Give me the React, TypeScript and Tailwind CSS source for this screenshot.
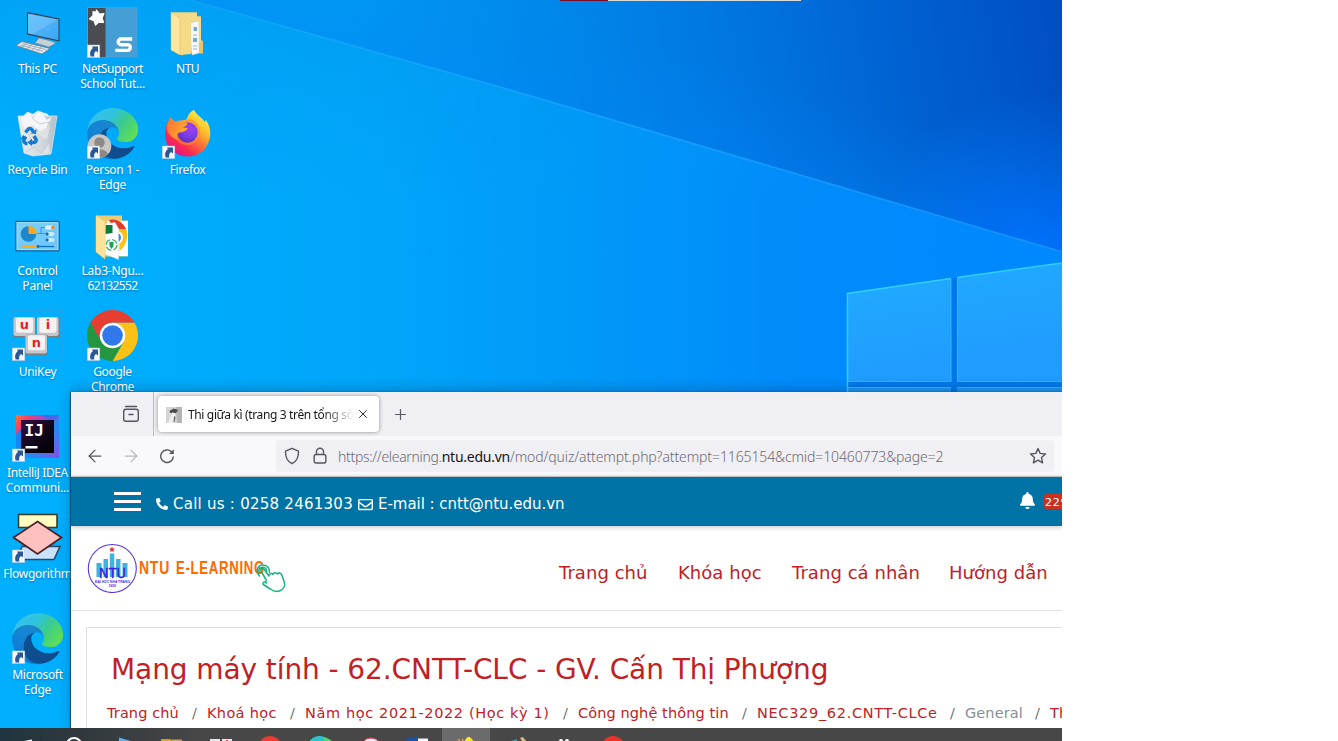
import type { ReactNode } from "react";
import { ArrowLeft, ArrowRight, Plus, X } from "lucide-react";
import { FaPhoneAlt, FaRegEnvelope, FaBell } from "react-icons/fa";

function Shortcut() {
  return (
    <g>
      <rect x="0.3" y="38" width="12.5" height="12.5" fill="#f4f7fb" stroke="#b8c9d8" strokeWidth="0.5" />
      <path d="M5 39.600h6v6l-2-1.700c-1.800 1.300-2.100 2.600-1.700 5.600H3.600c-1.100-3.700-.4-6.200 2.300-8.600Z" fill="#2b5797" />
    </g>
  );
}

function Glyph({ children }: { children: ReactNode }) {
  return (
    <svg viewBox="0 0 51 51" className="h-[51px] w-[51px] shrink-0 overflow-visible">
      {children}
    </svg>
  );
}

function ThisPC() {
  return (
    <Glyph>
      <defs>
        <linearGradient id="pcs" x1="0" y1="0" x2="1" y2="1">
          <stop offset="0" stopColor="#5fbcf8" />
          <stop offset="1" stopColor="#3aa6f5" />
        </linearGradient>
      </defs>
      <path d="M15 5l32.500 6.400v23L15 27.500Z" fill="#2f3d4a" />
      <path d="M16 6.600l30.500 6v20.600L16 26.400Z" fill="url(#pcs)" />
      <path d="M16 6.600l30.500 6L20 27.300l-4-.9Z" fill="#8fd2ff" opacity="0.350" />
      <path d="M27 31l5 1.200 6 1.500 6 2.300-7 4-14-4Z" fill="#c9d0d6" stroke="#77838d" strokeWidth="0.6" />
      <path d="M10 34.500l28 7-8 5.500L4 38.500Z" fill="#e6eaee" stroke="#6d7a85" strokeWidth="0.8" />
      <path d="M10 36.500l24 6M8 38l23 6.200M15 35.700l-5 4.500M20 37l-5 4.800M25 38.300l-5 4.900M30 39.500l-5 5.200" stroke="#8a97a3" strokeWidth="0.7" />
    </Glyph>
  );
}

function NetSupport() {
  return (
    <Glyph>
      <rect x="0.5" y="0.5" width="49.500" height="49.500" fill="#439fd6" stroke="#4ba4da" strokeWidth="0.800" />
      <rect x="1" y="1" width="17.500" height="49" fill="#4b4c51" />
      <path d="M9.500 3l3 4 4.500-.5-2 4.500 1.500 4.500-5-.2-3 2.700-1.500-4.200L2.500 12 6 8.800 6 4.500l3 .8Z" fill="#fff" stroke="#fff" strokeWidth="1.200" strokeLinejoin="round" />
      <path d="M43.500 32H34a2.800 2.800 0 0 0 0 5.700h6.500a2.800 2.800 0 0 1 0 5.700H30" fill="none" stroke="#fff" strokeWidth="3.400" strokeLinecap="square" />
      <Shortcut />
    </Glyph>
  );
}

function FolderNTU() {
  return (
    <Glyph>
      <path d="M9 5.500h26v4h4v24h2v13h-3L9 43Z" fill="#e7c566" />
      <path d="M9 5.500h26v4h4v26H9Z" fill="#f4d987" />
      <path d="M27 16l10-2v32l-7 2Z" fill="#fafafa" stroke="#c8cfd6" strokeWidth="0.6" />
      <path d="M31.500 20h3.500v4h-3.500zM31 31h4v4h-4z" fill="#3a87b8" opacity="0.700" />
      <path d="M31 28h4M31 39h4M31 42h4" stroke="#8aa2b2" strokeWidth="0.800" />
      <path d="M9 5.500l12 8v35L9 43Z" fill="#ffe8a0" />
      <path d="M18 9l11-3v41l-11 1Z" fill="#f5da88" />
      <path d="M9 5.500l9 5.500v37L9 43Z" fill="#fde7a3" stroke="#dfbd62" strokeWidth="0.6" />
    </Glyph>
  );
}

function RecycleBin() {
  return (
    <Glyph>
      <defs>
        <linearGradient id="bin" x1="0" y1="0" x2="1" y2="0">
          <stop offset="0" stopColor="#e8edf0" />
          <stop offset="0.6" stopColor="#d3dade" />
          <stop offset="1" stopColor="#b4bec6" />
        </linearGradient>
      </defs>
      <path d="M11 8l5-4 5 2 5-3.500 5 2 4 1 4 4.500-5 5H14Z" fill="#eef0f2" />
      <path d="M6 8h39l-6 38-18 2-9-3Z" fill="url(#bin)" stroke="#d8e4ec" strokeWidth="0.8" />
      <path d="M15 4l6 6 7-6 7 8 4-3-3 10-8 4-8-6-8 3-3-9Z" fill="#f5f6f7" />
      <path d="M20 10l8 6 9-2-4 12-9-3-8 4M14 44l8-5 8 6 7-9-3-8" fill="none" stroke="#bdc6cd" strokeWidth="0.800" />
      <path d="M24 24l14-6-3 14ZM29 47l8-12 1 10Z" fill="#f3f4f5" opacity="0.500" />
      <g fill="none" stroke="#1878d0" strokeWidth="3.400">
        <path d="M13.500 24.500l2.800-3.500q2-1.500 4 1l1 2" />
        <path d="M22 28l2.200 3.500q0 3-3 3h-2.500" />
        <path d="M15.500 35.500H14q-3-1.500-2-4l1.800-2.800" />
      </g>
      <path d="M19 25.500l5 .5.500-5ZM20 30.500l-4.500 4 4.500 3.500ZM15.500 30L11 27l-2.500 4.500Z" fill="#1878d0" />
    </Glyph>
  );
}

function EdgePaths({ id }: { id: string }) {
  return (
    <g transform="scale(0.2)">
      <defs>
        <linearGradient id={`${id}a`} x1="0.200" y1="0.200" x2="1" y2="0.500">
          <stop offset="0" stopColor="#0d4f91" />
          <stop offset="1" stopColor="#114a8b" />
        </linearGradient>
        <linearGradient id={`${id}b`} x1="0.700" y1="0" x2="0.200" y2="0.900">
          <stop offset="0" stopColor="#1b86cc" />
          <stop offset="0.500" stopColor="#1384d5" />
          <stop offset="1" stopColor="#0a78d4" />
        </linearGradient>
        <linearGradient id={`${id}c`} x1="0" y1="0.200" x2="1" y2="0.700">
          <stop offset="0" stopColor="#35c1f1" />
          <stop offset="0.400" stopColor="#2fc4dc" />
          <stop offset="0.650" stopColor="#3acb8e" />
          <stop offset="1" stopColor="#60e050" />
        </linearGradient>
      </defs>
      <path fill={`url(#${id}b)`} d="M105.7 241.4a79.2 79.2 0 0 1-22.7-21.3 80.7 80.7 0 0 1 29.5-120c3.2-1.500 8.500-4.100 15.600-4a32.400 32.400 0 0 1 25.700 13 31.900 31.900 0 0 1 6.300 18.700c0-.2 24.500-79.600-80-79.600-43.900 0-80 41.600-80 78.200a130.200 130.200 0 0 0 12.100 56 128 128 0 0 0 156.400 67 75.500 75.500 0 0 1-62.800-8Z" />
      <path fill={`url(#${id}a)`} d="M231 190.500c-3.400 1.800-6.900 3.400-10.500 4.700a101.600 101.600 0 0 1-35.900 6.400c-47.300 0-88.500-32.500-88.500-74.300a31.500 31.500 0 0 1 16.400-27.300c-42.800 1.800-53.800 46.400-53.800 72.500 0 74 68.100 81.400 82.800 81.400 7.900 0 19.800-2.300 27-4.600l1.300-.4a128.300 128.300 0 0 0 66.600-52.800 4 4 0 0 0-5.400-5.600Z" />
      <path fill={`url(#${id}c)`} d="M152.300 148.900c-.8 1-3.300 2.500-3.300 5.700 0 2.600 1.700 5.100 4.700 7.200 14.400 10 41.500 8.700 41.600 8.700 10.700 0 21.100-2.900 30.300-8.300a61.400 61.400 0 0 0 30.400-52.900c.3-22.400-8-37.300-11.300-43.900C223.500 23.900 177.700 0 128 0A128 128 0 0 0 0 126.200c.5-36.500 36.800-66 80-66 3.500 0 23.500.3 42 10.100 16.300 8.600 24.900 18.900 30.800 29.200 6.200 10.700 7.300 24.100 7.300 29.500s-2.700 13.300-7.800 19.900Z" />
    </g>
  );
}

function EdgePerson() {
  return (
    <Glyph>
      <EdgePaths id="ep" />
      <circle cx="12.500" cy="38" r="11.800" fill="#c9c6c4" />
      <circle cx="12.500" cy="34.500" r="5.200" fill="#8d8884" />
      <path d="M4 46a9 7 0 0 1 17 0 12 12 0 0 1-17 0Z" fill="#8d8884" />
      <Shortcut />
    </Glyph>
  );
}

function Edge() {
  return (
    <Glyph>
      <EdgePaths id="me" />
      <Shortcut />
    </Glyph>
  );
}

function Firefox() {
  return (
    <Glyph>
      <defs>
        <linearGradient id="fxa" x1="0.850" y1="0.050" x2="0.200" y2="0.900">
          <stop offset="0" stopColor="#fff34f" />
          <stop offset="0.300" stopColor="#ffc02e" />
          <stop offset="0.550" stopColor="#ff7139" />
          <stop offset="0.800" stopColor="#fb2c50" />
          <stop offset="1" stopColor="#e31587" />
        </linearGradient>
        <radialGradient id="fxb" cx="0.650" cy="0.300" r="0.800">
          <stop offset="0" stopColor="#a43df0" />
          <stop offset="0.500" stopColor="#7a3fe8" />
          <stop offset="1" stopColor="#5b2bb8" />
        </radialGradient>
        <linearGradient id="fxc" x1="0" y1="0" x2="1" y2="0.600">
          <stop offset="0" stopColor="#ff6a36" />
          <stop offset="1" stopColor="#ffb12c" />
        </linearGradient>
      </defs>
      <path d="M32 2c2.500 5 9 8 11 12.500l.5-3C47 16 48.700 21 48.200 27A22.600 22.600 0 0 1 3 25c0-6 2-10 4.500-12.500L7.800 9l5.500 4.800c2-1 4-1.400 6.200-1.200l5-1C25.500 8 28.500 3 32 2Z" fill="url(#fxa)" />
      <path d="M28 11c4 1 10 5 10.500 13 0 8-6 13-13 13-8 0-14-6-13-14l5-8Z" fill="#ff8a2b" opacity="0.600" />
      <circle cx="25.500" cy="24.500" r="10.200" fill="url(#fxb)" />
      <path d="M7.800 9l5.700 5c2.500-1 5-.8 6.500.4l5 .2c1 2-1.500 4-4.300 5l5 .4c-.8 3-5 4-8 4.500-2.500.8-4 3.500-2 7.500C9 30 4.500 24 5 18Z" fill="url(#fxc)" />
      <Shortcut />
    </Glyph>
  );
}

function ControlPanel() {
  return (
    <Glyph>
      <defs>
        <linearGradient id="cp" x1="0" y1="0" x2="1" y2="1">
          <stop offset="0" stopColor="#7dd2fb" />
          <stop offset="1" stopColor="#69c4f6" />
        </linearGradient>
      </defs>
      <rect x="3.800" y="12.300" width="43.400" height="29.500" rx="0.800" fill="url(#cp)" stroke="#15609c" strokeWidth="1.300" />
      <rect x="5.200" y="13.700" width="40.600" height="26.700" fill="none" stroke="#9be2ff" strokeWidth="0.900" />
      <circle cx="16.500" cy="25" r="7.800" fill="#1d86cc" />
      <path d="M16.500 25V16.700a8.300 8.300 0 0 1 8.300 8.300Z" fill="#ffa716" />
      <path d="M25 24.500h4v-6h4M29 24.500h4" fill="none" stroke="#1d7fc6" strokeWidth="0.700" />
      <rect x="33" y="16.500" width="9.500" height="4" rx="2" fill="#dff3ff" />
      <circle cx="40.800" cy="18.500" r="1.800" fill="#f58220" />
      <rect x="33" y="23" width="9.500" height="4" rx="2" fill="#c7eaff" />
      <circle cx="35" cy="25" r="1.700" fill="#146bb0" />
      <rect x="33" y="29" width="9.500" height="4" rx="2" fill="#c7eaff" />
      <circle cx="35" cy="31" r="1.700" fill="#146bb0" />
      <path d="M9.500 37.500H26" stroke="#ffa716" strokeWidth="1.200" />
      <path d="M26 37.500h16" stroke="#0d6cc1" strokeWidth="1.200" />
      <circle cx="26" cy="37.500" r="1.400" fill="#0d6cc1" />
    </Glyph>
  );
}

function LabFolder() {
  return (
    <Glyph>
      <path d="M9 6.500h26v5h6v36H15L9 42Z" fill="#edcd74" />
      <path d="M20 12h21v35H22Z" fill="#fbfbfb" />
      <path d="M22 11c7-2 14 2 17 9H27Z" fill="#e33b2e" />
      <path d="M32 20h7.500c2.500 9-1 17-7 22Z" fill="#fbc116" />
      <circle cx="29" cy="28.500" r="6" fill="#3b82e8" stroke="#fff" strokeWidth="2" />
      <path d="M18 15l10-1.500 3.500 6v31L18 45Z" fill="#fff" stroke="#d4d9dc" strokeWidth="0.500" />
      <path d="M18.500 16h7v8l-7 1z" fill="#0d7a3c" />
      <circle cx="24.500" cy="36" r="5.300" fill="none" stroke="#39b56a" strokeWidth="1.300" strokeDasharray="6 2.300" />
      <path d="M22.500 33h4v4l-2 3-2-3Z" fill="#1d9d50" />
      <path d="M9 6.500l9 6.800V50L9 43Z" fill="#ffe39b" stroke="#e9cd78" strokeWidth="0.500" />
    </Glyph>
  );
}

function KeyCap({ x, y, letter }: { x: number; y: number; letter: string }) {
  return (
    <g>
      <rect x={x} y={y} width="22.500" height="20.500" rx="2" fill="#7c7c80" />
      <rect x={x} y={y} width="21.500" height="19" rx="2" fill="#c7c7ca" />
      <rect x={x + 2.5} y={y + 0.8} width="17" height="15" rx="2" fill="#f3f3f4" />
      <text x={x + 11} y={y + 12} textAnchor="middle" className="font-['DejaVu_Sans'] text-[13px] font-bold" fill="#ee1c25">
        {letter}
      </text>
    </g>
  );
}

function UniKey() {
  return (
    <Glyph>
      <rect x="0.500" y="0.500" width="50" height="50" fill="none" stroke="#1fa5ee" strokeWidth="1" />
      <KeyCap x={1.5} y={7} letter="u" />
      <KeyCap x={25} y={7} letter="i" />
      <KeyCap x={13.5} y={24.5} letter="n" />
      <Shortcut />
    </Glyph>
  );
}

function Chrome() {
  return (
    <Glyph>
      <path d="M3.400 12.750A25.500 25.500 0 0 1 47.600 12.750H25.500L14.500 31.900Z" fill="#e63e31" />
      <path d="M47.600 12.750A25.500 25.500 0 0 1 25.500 51L36.500 31.900 25.500 12.750Z" fill="#fbc116" />
      <path d="M25.500 51A25.500 25.500 0 0 1 3.400 12.750L14.500 31.900H36.500Z" fill="#24963f" />
      <circle cx="25.500" cy="25.500" r="12.750" fill="#fff" />
      <circle cx="25.500" cy="25.500" r="10.300" fill="#3078ec" />
      <Shortcut />
    </Glyph>
  );
}

function IntelliJ() {
  return (
    <Glyph>
      <defs>
        <linearGradient id="ija" x1="0" y1="0" x2="1" y2="1">
          <stop offset="0" stopColor="#fd7a30" />
          <stop offset="0.150" stopColor="#f9425f" />
          <stop offset="0.350" stopColor="#a04ad0" />
          <stop offset="0.600" stopColor="#1f8ff5" />
          <stop offset="1" stopColor="#8a4dea" />
        </linearGradient>
        <linearGradient id="ijb" x1="0" y1="0" x2="1" y2="1">
          <stop offset="0" stopColor="#351045" />
          <stop offset="0.550" stopColor="#10061a" />
          <stop offset="1" stopColor="#000" />
        </linearGradient>
      </defs>
      <rect x="4" y="4" width="43" height="43" fill="url(#ija)" />
      <path d="M4 24v23l14-5L8 18Z" fill="#1686f2" />
      <path d="M30 4h17L40 12Z" fill="#4a65ea" />
      <rect x="9" y="9" width="33" height="33" fill="url(#ijb)" />
      <text x="12.500" y="25" className="font-['DejaVu_Sans_Mono'] text-[16px] font-bold" fill="#fff">
        IJ
      </text>
      <rect x="13.500" y="35" width="12" height="2.500" fill="#fff" />
      <Shortcut />
    </Glyph>
  );
}

function Flowgorithm() {
  return (
    <Glyph>
      <rect x="6.500" y="2.500" width="38.500" height="13" fill="#ffffc4" stroke="#3d3d2a" strokeWidth="1.600" />
      <path d="M10 34.500h38l-6 13H5Z" fill="#c9e2ff" stroke="#27466f" strokeWidth="1.600" />
      <path d="M25.500 9.500L49.500 25.500 25.500 42 1.500 25.500Z" fill="#ffc0c0" stroke="#4d2226" strokeWidth="1.800" />
      <Shortcut />
    </Glyph>
  );
}

const columns: { icon: () => ReactNode; lines: { text: string; cls: string }[] }[][] = [
  [
    { icon: ThisPC, lines: [{ text: "This PC", cls: "tracking-[-0.3px]" }] },
    { icon: RecycleBin, lines: [{ text: "Recycle Bin", cls: "tracking-[-0.3px]" }] },
    { icon: ControlPanel, lines: [{ text: "Control", cls: "tracking-[-0.2px]" }, { text: "Panel", cls: "tracking-[-0.2px]" }] },
    { icon: UniKey, lines: [{ text: "UniKey", cls: "tracking-[-0.3px]" }] },
    { icon: IntelliJ, lines: [{ text: "IntelliJ IDEA", cls: "tracking-[-0.35px]" }, { text: "Communi...", cls: "tracking-[-0.15px]" }] },
    { icon: Flowgorithm, lines: [{ text: "Flowgorithm", cls: "tracking-[-0.25px]" }] },
    { icon: Edge, lines: [{ text: "Microsoft", cls: "tracking-[-0.3px]" }, { text: "Edge", cls: "tracking-[-0.3px]" }] },
  ],
  [
    { icon: NetSupport, lines: [{ text: "NetSupport", cls: "tracking-[-0.45px]" }, { text: "School Tut...", cls: "tracking-[-0.25px]" }] },
    { icon: EdgePerson, lines: [{ text: "Person 1 -", cls: "tracking-[-0.3px]" }, { text: "Edge", cls: "tracking-[-0.3px]" }] },
    { icon: LabFolder, lines: [{ text: "Lab3-Ngu...", cls: "tracking-[-0.25px]" }, { text: "62132552", cls: "tracking-[-0.6px]" }] },
    { icon: Chrome, lines: [{ text: "Google", cls: "tracking-[-0.3px]" }, { text: "Chrome", cls: "tracking-[-0.3px]" }] },
  ],
  [
    { icon: FolderNTU, lines: [{ text: "NTU", cls: "tracking-[-0.6px]" }] },
    { icon: Firefox, lines: [{ text: "Firefox", cls: "tracking-[-0.4px]" }] },
  ],
];

function Wallpaper() {
  return (
    <svg viewBox="0 0 1062 728" className="absolute inset-0 h-[728px] w-[1062px]">
      <defs>
        <linearGradient id="base" x1="0" y1="0" x2="1062" y2="0" gradientUnits="userSpaceOnUse">
          <stop offset="0" stopColor="#00b0fe" />
          <stop offset="0.350" stopColor="#00a6fa" />
          <stop offset="0.550" stopColor="#0099f8" />
          <stop offset="0.750" stopColor="#008bfb" />
          <stop offset="1" stopColor="#0088ff" />
        </linearGradient>
        <linearGradient id="upper" x1="300" y1="130" x2="1062" y2="0" gradientUnits="userSpaceOnUse">
          <stop offset="0" stopColor="#0098f2" stopOpacity="0.200" />
          <stop offset="0.250" stopColor="#008dec" stopOpacity="0.900" />
          <stop offset="0.550" stopColor="#0078e2" />
          <stop offset="0.780" stopColor="#0062d2" />
          <stop offset="1" stopColor="#004ec2" />
        </linearGradient>
        <radialGradient id="glow" cx="1030" cy="262" r="170" gradientUnits="userSpaceOnUse">
          <stop offset="0" stopColor="#0074ff" />
          <stop offset="0.300" stopColor="#0070fa" stopOpacity="0.700" />
          <stop offset="1" stopColor="#0078f4" stopOpacity="0" />
        </radialGradient>
        <linearGradient id="rim" x1="780" y1="80" x2="745" y2="190" gradientUnits="userSpaceOnUse">
          <stop offset="0" stopColor="#0082f4" stopOpacity="0" />
          <stop offset="1" stopColor="#0084f6" stopOpacity="0.450" />
        </linearGradient>
        <linearGradient id="top" x1="0" y1="0" x2="0" y2="200" gradientUnits="userSpaceOnUse">
          <stop offset="0" stopColor="#0098ee" stopOpacity="0.500" />
          <stop offset="1" stopColor="#0098ee" stopOpacity="0" />
        </linearGradient>
        <linearGradient id="pane" x1="0" y1="0" x2="0.300" y2="1">
          <stop offset="0" stopColor="#20acff" />
          <stop offset="1" stopColor="#209bff" />
        </linearGradient>
        <linearGradient id="beam" x1="190" y1="0" x2="1062" y2="252" gradientUnits="userSpaceOnUse">
          <stop offset="0" stopColor="#1cb2ff" stopOpacity="0.300" />
          <stop offset="0.400" stopColor="#14a0ff" />
          <stop offset="1" stopColor="#1690ff" />
        </linearGradient>
        <linearGradient id="shade" x1="0" y1="378" x2="0" y2="392" gradientUnits="userSpaceOnUse">
          <stop offset="0" stopColor="#003a70" stopOpacity="0" />
          <stop offset="1" stopColor="#003a70" stopOpacity="0.060" />
        </linearGradient>
      </defs>
      <rect width="1062" height="728" fill="url(#base)" />
      <rect width="1062" height="200" fill="url(#top)" />
      <path d="M190 0H1062V252L500 87Z" fill="url(#upper)" />
      <path d="M190 0H1062V252L500 87Z" fill="url(#rim)" />
      <path d="M190 0H1062V252L500 87Z" fill="url(#glow)" />
      <path d="M190 0L500 87 1062 252" fill="none" stroke="url(#beam)" strokeWidth="1.800" />
      <path d="M847 293L951 278V381H847ZM957 277L1062 263V381H957Z" fill="url(#pane)" />
      <path d="M847 387H951V400H847ZM957 387H1062V400H957Z" fill="#1c98f0" />
      <path d="M951 278H957V392H951ZM847 382H1062V387H847Z" fill="#0078ea" />
      <path d="M847.500 392V293.500L951 278.500M957 277.500L1062 263" fill="none" stroke="#2fcfff" strokeWidth="1.500" />
      <path d="M951 279V381.500H848M957.500 278V381.500H1062M848 387.500H951M957 387.500H1062" fill="none" stroke="#32baff" strokeWidth="0.900" />
      <rect x="71" y="378" width="991" height="14" fill="url(#shade)" />
    </svg>
  );
}

function NtuLogo() {
  return (
    <svg viewBox="0 0 50 50" className="h-[50px] w-[50px] shrink-0">
      <circle cx="25.300" cy="25.500" r="24" fill="#fff" stroke="#5836e6" strokeWidth="1.100" />
      <path d="M9.500 20h5v14h-5zM16.500 16h4.500v18h-4.500zM22.800 10.500h4.500V34h-4.500zM29 16h4.500v18H29zM35.500 20h5v14h-5z" fill="#3fb2e2" />
      <path d="M25 4.200l.7 1.500 1.600.1-1.200 1.100.4 1.600-1.500-.8-1.500.8.400-1.600-1.200-1.100 1.600-.1Z" fill="#e02727" stroke="#e02727" strokeWidth="0.500" />
      <text x="12" y="34.500" textLength="27" lengthAdjust="spacingAndGlyphs" className="font-['DejaVu_Sans'] text-[13.500px]" fill="#3a20dc" stroke="#3a20dc" strokeWidth="0.300">
        NTU
      </text>
      <text x="8" y="40" textLength="35" lengthAdjust="spacingAndGlyphs" className="font-['Liberation_Sans'] text-[4px] font-bold" fill="#4a2be0">
        ĐẠI HỌC NHA TRANG
      </text>
      <text x="21.500" y="44.300" textLength="7.500" lengthAdjust="spacingAndGlyphs" className="font-['Liberation_Sans'] text-[3.200px] font-bold" fill="#4a2be0">
        1959
      </text>
    </svg>
  );
}

function BrandWord() {
  return (
    <svg viewBox="0 0 150 50" className="h-[50px] w-[150px] shrink-0 overflow-visible">
      <g className="font-['Liberation_Sans'] text-[18.500px] font-bold tracking-[1px]" fill="#ff6a00">
        <text x="2" y="30.500" textLength="31" lengthAdjust="spacingAndGlyphs">
          NTU
        </text>
        <text x="39" y="30.500" textLength="89" lengthAdjust="spacingAndGlyphs">
          E-LEARNING
        </text>
      </g>
      <g fill="none" stroke="#12b57c" strokeWidth="1.500" strokeLinecap="round" strokeLinejoin="round">
        <path d="M129.500 37.500l-5.500-9.500c-1-2 1.800-3.500 3-1.700l5 6.700c-.2-2.600 2.800-3.300 4-1.500 .2-2 3.200-2.500 4.300-.5 1-1.600 3.700-1.200 4.500 1l2.500 7c1.200 4-.8 7.500-5 9-3.500 1.200-6.500-.3-9-2l-7-4.500c-1.500-1.500 1-4 3.200-1.500" />
        <path d="M122.500 30c-1.800-3 .3-6 3.500-5.700 2.500.2 3.800 2.300 3.500 4" />
        <path d="M122.500 33c-4-4-2.500-11 3.500-11 4.500 0 6.800 3.500 6.500 7.500" />
      </g>
    </svg>
  );
}

function TabStrip() {
  return (
    <div className="flex h-[44px] shrink-0 items-start bg-[#f0eff4]">
      <div className="flex h-[44px] w-[83px] items-center justify-end border-r border-[#bcbcc2] pr-[13px]">
        <svg viewBox="0 0 18 18" className="h-[18px] w-[18px]" fill="none" stroke="#55545f" strokeWidth="1.400" strokeLinecap="round">
          <path d="M3.500 1.500h11" />
          <rect x="1.700" y="4.200" width="14.600" height="12" rx="2.200" />
          <path d="M7 9.500h4" />
        </svg>
      </div>
      <div className="mt-[4px] ml-[4px] flex h-[36px] w-[221px] items-center rounded-[4px] bg-white pl-[8px] shadow-[0_0_4px_rgba(0,0,0,0.4)]">
        <svg viewBox="0 0 16 16" className="mt-[1px] h-[16px] w-[16px] shrink-0">
          <rect width="16" height="16" fill="#d4d4d4" />
          <path d="M10 0h6v16h-5Z" fill="#b4b4b4" />
          <path d="M4 3.500L8 1.500l4 1.500-1.500 2.500L8 7 5.500 6.500 3.500 5Z" fill="#4a4a4a" />
          <path d="M6 5.500l3 .5.500 4L7 16H2Z" fill="#f0f0f0" />
          <path d="M8 9l1.500 1L8.500 15H7.500Z" fill="#666" />
        </svg>
        <div className="mt-[2px] ml-[6px] w-[166px] overflow-hidden bg-gradient-to-r from-[#15141a] from-80% to-white to-100% bg-clip-text font-['Noto_Sans',sans-serif] text-[12px] leading-[18px] tracking-[-0.36px] whitespace-nowrap text-transparent">
          Thi giữa kì (trang 3 trên tổng số 3)
        </div>
        <X className="ml-[2px] h-[14px] w-[14px] shrink-0 text-[#2b2a33]" strokeWidth={1.7} />
      </div>
      <Plus className="mt-[14px] ml-[13px] h-[17px] w-[17px] text-[#5b5b66]" strokeWidth={1.7} />
    </div>
  );
}

function Toolbar() {
  return (
    <div className="flex h-[41px] shrink-0 items-center border-b border-[#cccccf] bg-[#f9f9fb]">
      <ArrowLeft className="ml-[14px] h-[20px] w-[20px] shrink-0 text-[#55545f]" strokeWidth={1.5} />
      <ArrowRight className="ml-[16px] h-[20px] w-[20px] shrink-0 text-[#bab9be]" strokeWidth={1.5} />
      <svg viewBox="0 0 16 16" className="ml-[18px] h-[16px] w-[16px] shrink-0" fill="none" stroke="#55545f" strokeWidth="1.400">
        <path d="M14.300 8.500A6.300 6.300 0 1 1 12.500 3.800L14 5.400" />
        <path d="M14.800 1.200V6H10Z" fill="#55545f" stroke="none" />
      </svg>
      <div className="ml-[101px] flex h-[32px] w-[778px] shrink-0 items-center rounded-[4px] bg-[#f0eff4] pl-[8px]">
        <svg viewBox="0 0 16 18" className="h-[18px] w-[16px] shrink-0" fill="none" stroke="#55545f" strokeWidth="1.400" strokeLinejoin="round">
          <path d="M8 1.300l6.500 2.800c.3 6-2.500 10.600-6.500 12.600C4 14.700 1.200 10.100 1.500 4.100Z" />
        </svg>
        <svg viewBox="0 0 14 18" className="ml-[13px] h-[18px] w-[14px] shrink-0" fill="none" stroke="#55545f" strokeWidth="1.400">
          <rect x="1.200" y="7.500" width="11.600" height="8.500" rx="1.800" />
          <path d="M3.500 7.500V4.800a3.500 3.500 0 0 1 7 0v2.700" />
        </svg>
        <div className="mt-[2px] ml-[11px] w-[691px] font-['Noto_Sans',sans-serif] text-[14px] leading-[20px] font-light tracking-[-0.12px] whitespace-nowrap text-[#6c6b73]">
          <span className="tracking-[-0.32px]">https://elearning.</span>
          <span className="font-normal tracking-[-0.25px] text-[#15141a]">ntu.edu.vn</span>/mod/quiz/attempt.php?attempt=1165154&amp;cmid=10460773&amp;page=2
        </div>
        <svg viewBox="0 0 18 18" className="h-[18px] w-[18px] shrink-0" fill="none" stroke="#55545f" strokeWidth="1.400" strokeLinejoin="round">
          <path d="M9 1.500l2.200 4.900 5.300.6-4 3.600 1.100 5.200L9 13.200l-4.600 2.600 1.100-5.200-4-3.600 5.300-.6Z" />
        </svg>
      </div>
    </div>
  );
}

function TopBar() {
  return (
    <div className="z-10 flex h-[49px] shrink-0 items-center bg-[#0073a6] font-['DejaVu_Sans'] text-[15px] whitespace-nowrap text-white shadow-[0_1px_5px_rgba(0,0,0,0.25)]">
      <div className="ml-[43px] flex w-[27px] shrink-0 flex-col gap-[5px]">
        <div className="h-[3px] bg-white" />
        <div className="h-[3px] bg-white" />
        <div className="h-[3px] bg-white" />
      </div>
      <div className="ml-[15px] flex w-[864px] shrink-0 items-center pt-[5px]">
        <FaPhoneAlt className="h-[12px] w-[12px]" />
        <span className="ml-[5px] w-[185px] tracking-[0.25px]">Call us : 0258 2461303</span>
        <FaRegEnvelope className="h-[15px] w-[15px]" />
        <span className="ml-[5px] tracking-[-0.03px]">E-mail : cntt@ntu.edu.vn</span>
      </div>
      <FaBell className="-mt-[2px] h-[17px] w-[15px] shrink-0" />
      <div className="ml-[9px] h-[15px] w-[40px] shrink-0 rounded-[2px] bg-[#ca3120] pl-[1px] text-[11px] leading-[17px] tracking-[0.7px]">229</div>
    </div>
  );
}

const nav = [
  { text: "Trang chủ", cls: "w-[119px]" },
  { text: "Khóa học", cls: "w-[114px]" },
  { text: "Trang cá nhân", cls: "w-[157px]" },
  { text: "Hướng dẫn", cls: "w-[120px]" },
];

const crumbs = [
  { text: "Trang chủ", cls: "w-[100px] text-[#c12026]", spacing: "tracking-[0.1px]" },
  { text: "Khoá học", cls: "w-[98px] text-[#c12026]", spacing: "tracking-[0.35px]" },
  { text: "Năm học 2021-2022 (Học kỳ 1)", cls: "w-[273px] text-[#c12026]", spacing: "tracking-[0.62px]" },
  { text: "Công nghệ thông tin", cls: "w-[179px] text-[#c12026]", spacing: "tracking-[0.1px]" },
  { text: "NEC329_62.CNTT-CLCe", cls: "w-[208px] text-[#c12026]", spacing: "tracking-[0.68px]" },
  { text: "General", cls: "w-[85px] text-[#868e96]", spacing: "tracking-[0.1px]" },
  { text: "Thi giữa kì", cls: "w-[100px] text-[#c12026]", spacing: "tracking-[0.1px]" },
];

function Browser() {
  return (
    <div className="absolute top-[392px] left-[71px] flex h-[336px] w-[991px] flex-col overflow-hidden bg-white">
      <TabStrip />
      <Toolbar />
      <TopBar />
      <div className="flex h-[85px] shrink-0 items-start border-b border-[#e2e3e5] pt-[17px] pl-[16px]">
        <NtuLogo />
        <BrandWord />
        <div className="mt-[17px] ml-[272px] flex font-['DejaVu_Sans'] text-lg leading-[26px] tracking-[0.05px] whitespace-nowrap text-[#c12026]">
          {nav.map((n) => (
            <div key={n.text} className={`${n.cls} shrink-0`}>
              {n.text}
            </div>
          ))}
        </div>
      </div>
      <div className="mt-[16px] ml-[15px] h-[120px] w-[1100px] shrink-0 border border-[#dedfe1] font-['DejaVu_Sans'] text-[#c12026]">
        <h1 className="mt-[24px] ml-[24px] text-[28px] leading-[36px] tracking-[-0.09px] whitespace-nowrap">Mạng máy tính - 62.CNTT-CLC - GV. Cấn Thị Phượng</h1>
        <div className="mt-[15px] ml-[20px] flex text-[14.500px] leading-[20px] whitespace-nowrap">
          {crumbs.map((c) => (
            <div key={c.text} className={`${c.cls} flex shrink-0 justify-between pr-[10px]`}>
              <span className={c.spacing}>{c.text}</span>
              <span className="text-[#6c757d]">/</span>
            </div>
          ))}
        </div>
      </div>
    </div>
  );
}

function Taskbar() {
  return (
    <div className="absolute top-[728px] left-0 h-[13px] w-[1062px] bg-[#474747]">
      <svg viewBox="0 0 1062 13" className="h-[13px] w-[1062px]">
        <defs>
          <linearGradient id="tb" x1="0" x2="1" y1="0" y2="0">
            <stop offset="0" stopColor="#1f3540" />
            <stop offset="0.400" stopColor="#30383d" />
            <stop offset="1" stopColor="#474747" />
          </linearGradient>
        </defs>
        <rect width="200" height="13" fill="url(#tb)" />
        <rect x="442" width="48" height="13" fill="#6b6b6b" />
        <path d="M24 13l8-1.500V13Z" fill="#fff" />
        <circle cx="74" cy="17.500" r="7.500" fill="none" stroke="#fff" strokeWidth="2" />
        <path d="M119 9.500l12 3.500h-12Z" fill="#5cb0ee" />
        <path d="M161 11h9l2 1h10v1h-21Z" fill="#dfa100" />
        <path d="M172 11.500h10V13h-10Z" fill="#cda954" />
        <path d="M210 11h10v2h-10zM222 11h10v2h-10z" fill="#e8e8ea" />
        <path d="M226 12h2v1h-2z" fill="#e33" />
        <circle cx="270" cy="20" r="12" fill="#ea3d30" />
        <circle cx="319.500" cy="20.500" r="12.500" fill="#2ec1cf" />
        <path d="M324 9q6 2 8 4h-8Z" fill="#4fd56b" />
        <circle cx="371" cy="20.500" r="10.500" fill="#f3edf0" stroke="#d94052" />
        <path d="M406 10.500l12-2V13h-12Z" fill="#2250a0" />
        <path d="M418 10.500h10V13h-10Z" fill="#f4f7ff" />
        <path d="M465 13l2.500-3.500h2.500L473 13Z" fill="#ffe62b" stroke="#ffe62b" />
        <path d="M458 11l2 2M462 11l1.500 2" stroke="#f1a01b" strokeWidth="1.300" />
        <path d="M511 13l6-2v2Z" fill="#3f96b8" />
        <path d="M520 10l3-1 3 4h-4Z" fill="#e1b77b" />
        <circle cx="561" cy="13" r="2" fill="#fff" />
        <circle cx="567" cy="13" r="2" fill="#fff" />
        <circle cx="613" cy="20" r="12" fill="#ea3328" />
      </svg>
    </div>
  );
}

export default function App() {
  return (
    <div className="h-[741px] w-[1338px] overflow-hidden bg-white">
      <div className="relative h-[741px] w-[1062px] overflow-hidden bg-[#00adff]">
        <Wallpaper />
        <div className="relative flex">
          {columns.map((col, i) => (
            <div key={i} className="flex w-[75px] flex-col">
              {col.map(({ icon: Icon, lines }) => (
                <div key={lines[0].text} className="flex h-[101px] flex-col items-center pt-[7px]">
                  <Icon />
                  <div className="mt-[3px] flex flex-col items-center font-['Noto_Sans',sans-serif] text-[12px] leading-[15px] whitespace-nowrap text-white [text-shadow:0_1px_2px_rgba(0,40,90,0.4)]">
                    {lines.map((l) => (
                      <span key={l.text} className={l.cls}>
                        {l.text}
                      </span>
                    ))}
                  </div>
                </div>
              ))}
            </div>
          ))}
        </div>
        <div className="absolute top-0 left-[560px] flex h-px w-[241px]">
          <div className="w-[48px] bg-[#7a0a2a]" />
          <div className="w-[193px] bg-[#d8dcd8]" />
        </div>
        <div className="absolute top-[392px] left-[71px] h-[336px] w-[1000px] shadow-[-1px_0_1px_rgba(0,50,80,0.7),0_0_12px_rgba(0,30,60,0.3)]" />
        <Browser />
        <Taskbar />
      </div>
    </div>
  );
}
